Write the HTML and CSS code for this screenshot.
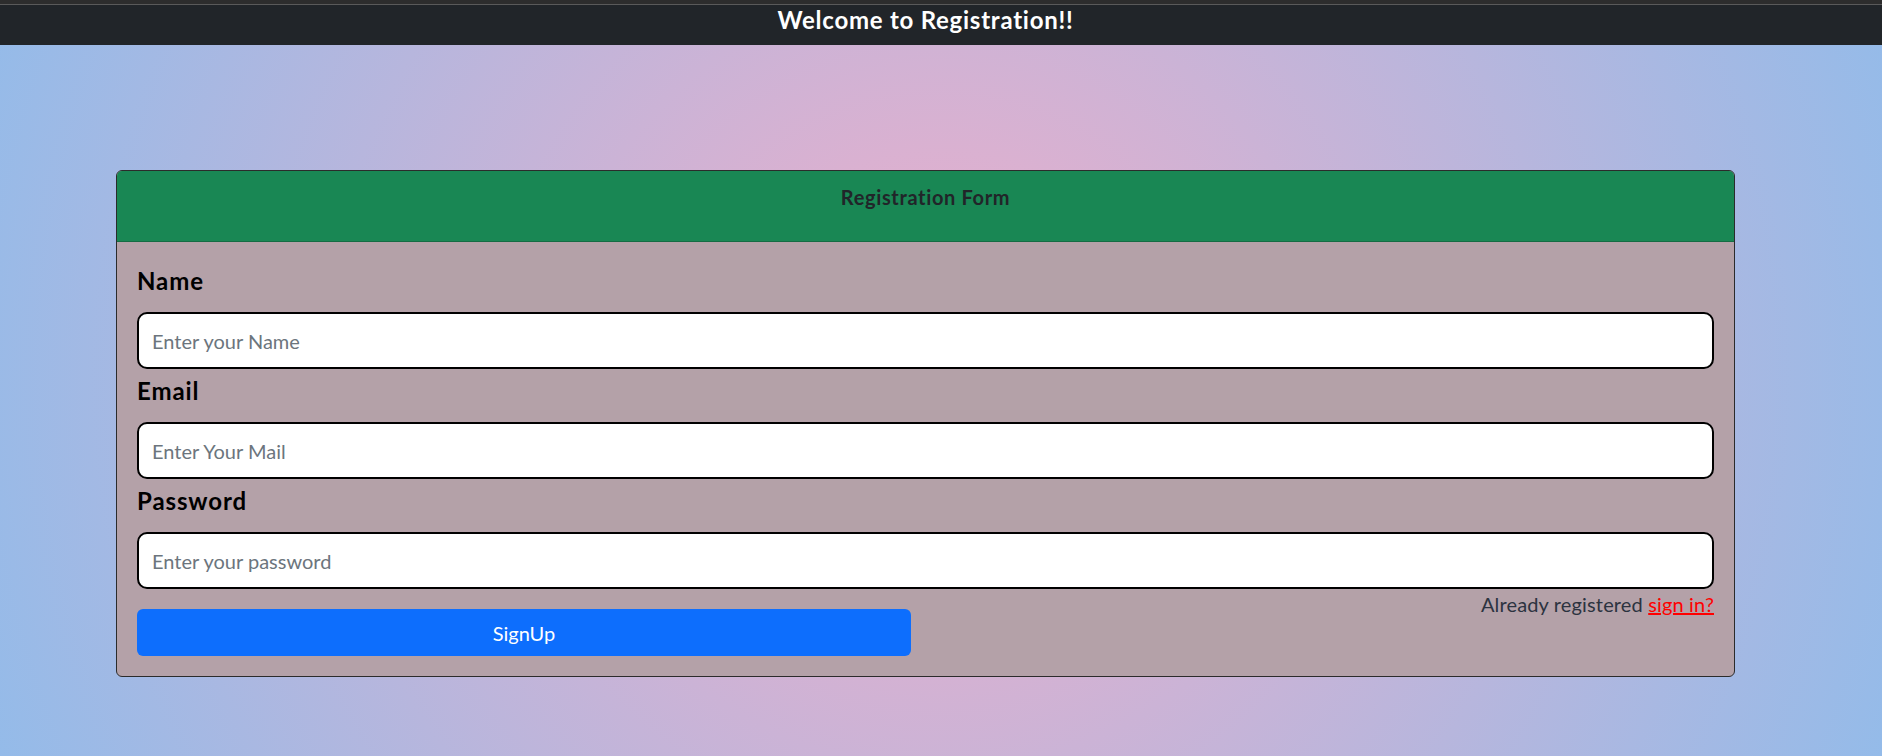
FILE: index.html
```html
<!DOCTYPE html>
<html lang="en">
<head>
<meta charset="utf-8">
<title>Registration</title>
<link rel="stylesheet" href="styles.css">
</head>
<body>
  <div class="topline"></div>
  <header class="navbar">
    <h1 class="nav-title">Welcome to Registration!!</h1>
  </header>
  <main class="page">
    <section class="card">
      <div class="card-header">
        <h2 class="card-title">Registration Form</h2>
      </div>
      <form class="card-body">
        <label class="field-label" for="name">Name</label>
        <input class="field-input" id="name" type="text" placeholder="Enter your Name">
        <label class="field-label" for="email">Email</label>
        <input class="field-input" id="email" type="email" placeholder="Enter Your Mail">
        <label class="field-label" for="password">Password</label>
        <input class="field-input" id="password" type="password" placeholder="Enter your password">
        <div class="form-footer">
          <button class="btn-signup" type="button">SignUp</button>
          <p class="signin-note">Already registered <a class="signin-link" href="#">sign in?</a></p>
        </div>
      </form>
    </section>
  </main>
</body>
</html>
```
FILE: styles.css
```css
* { box-sizing: border-box; }

html, body {
  margin: 0;
  padding: 0;
}

body {
  min-height: 100vh;
  font-family: Lato, "Liberation Sans", sans-serif;
  background: radial-gradient(circle, rgba(238,174,202,1) 0%, rgba(148,187,233,1) 100%);
  color: #212529;
}

.topline {
  height: 5px;
  background: #2d2d2d;
  border-bottom: 1px solid #5a5a5a;
}

.navbar {
  height: 40px;
  background: #212529;
  padding-right: 31px;
}

.nav-title {
  margin: 0;
  text-align: center;
  color: #fff;
  font-size: 24px;
  font-weight: 700;
  line-height: 30px;
  letter-spacing: 0.75px;
}

.page {
  padding: 125px 147px 0 116px;
}

.card {
  border: 1px solid #2b2b2b;
  border-radius: 6px;
  overflow: hidden;
  background: #b4a1a8;
}

.card-header {
  height: 71px;
  background: #198754;
  border-bottom: 1px solid #146c43;
  padding: 14px 16px 0;
}

.card-title {
  margin: 0;
  text-align: center;
  font-size: 20px;
  font-weight: 700;
  line-height: 24px;
  letter-spacing: 0.65px;
  color: #212529;
}

.card-body {
  display: flex;
  flex-direction: column;
  padding: 17px 20px 20px;
}

.field-label {
  display: block;
  margin: 4px 0 13px;
  font-size: 24px;
  font-weight: 700;
  line-height: 36px;
  letter-spacing: 0.9px;
  color: #000;
}

.field-input {
  display: block;
  width: 100%;
  height: 57px;
  padding: 0 13px;
  border: 2px solid #000;
  border-radius: 10px;
  background: #fff;
  font-family: inherit;
  font-size: 20px;
  color: #212529;
  outline: none;
}

.field-input::placeholder {
  color: #6c757d;
  opacity: 1;
}

.form-footer {
  display: flex;
  justify-content: space-between;
  align-items: flex-start;
}

.btn-signup {
  margin-top: 20px;
  width: 774px;
  height: 47px;
  border: none;
  border-radius: 6px;
  background: #0d6efd;
  color: #fff;
  font-family: inherit;
  font-size: 20px;
  line-height: 30px;
  cursor: pointer;
}

.signin-note {
  margin: 0;
  font-size: 20px;
  line-height: 30px;
  letter-spacing: 0.15px;
  color: #2c3340;
}

.signin-link {
  color: #ff0000;
  text-decoration: underline;
}
```
